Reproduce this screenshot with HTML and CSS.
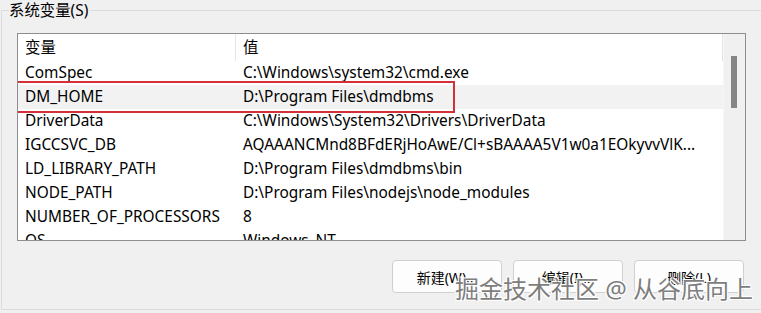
FILE: index.html
```html
<!DOCTYPE html>
<html>
<head>
  <meta charset="UTF-8">
  <title>系统变量</title>
  <link rel="stylesheet" href="styles.css">
</head>
<body>
  <div class="group">
    <div class="legend">系统变量(S)</div>

    <!-- variable list -->
    <div class="listbox">
      <div class="list">
        <div class="row head">
          <div class="col name">变量</div>
          <div class="col value">值</div>
        </div>
        <div class="row">
          <div class="col name">ComSpec</div>
          <div class="col value">C:\Windows\system32\cmd.exe</div>
        </div>
        <div class="row selected">
          <div class="col name">DM_HOME</div>
          <div class="col value">D:\Program Files\dmdbms</div>
          <div class="mark"></div>
        </div>
        <div class="row">
          <div class="col name">DriverData</div>
          <div class="col value">C:\Windows\System32\Drivers\DriverData</div>
        </div>
        <div class="row">
          <div class="col name">IGCCSVC_DB</div>
          <div class="col value">AQAAANCMnd8BFdERjHoAwE/Cl+sBAAAA5V1w0a1EOkyvvVlK...</div>
        </div>
        <div class="row">
          <div class="col name">LD_LIBRARY_PATH</div>
          <div class="col value">D:\Program Files\dmdbms\bin</div>
        </div>
        <div class="row">
          <div class="col name">NODE_PATH</div>
          <div class="col value">D:\Program Files\nodejs\node_modules</div>
        </div>
        <div class="row">
          <div class="col name">NUMBER_OF_PROCESSORS</div>
          <div class="col value">8</div>
        </div>
        <div class="row">
          <div class="col name">OS</div>
          <div class="col value">Windows_NT</div>
        </div>
      </div>
      <div class="scrollbar">
        <div class="thumb"></div>
      </div>
    </div>

    <!-- buttons -->
    <div class="buttons">
      <button>新建(W)...</button>
      <button>编辑(I)...</button>
      <button>删除(L)</button>
    </div>

    <div class="watermark">掘金技术社区 @ 从谷底向上</div>
  </div>
</body>
</html>
```

FILE: styles.css
```css
/* Windows-style environment variable dialog */
body {
  margin: 0;
  background-color: #f0f0f0;
  font-family: "Segoe UI", "Noto Sans", "Noto Sans CJK SC", sans-serif;
  font-size: 15.4px;
  color: #000;
}
.group {
  position: relative;
  margin: 10px 0 0 1px;
  height: 300px;
  border-left: 1px solid #dcdcdc;
  border-top: 1px solid #dcdcdc;
  border-bottom: 1px solid #dcdcdc;
  box-sizing: border-box;
}
.legend {
  display: inline-block;
  margin: -10px 0 0 7px;
  padding: 0 2px 0 0;
  height: 20px;
  line-height: 20px;
  background-color: #f0f0f0;
  vertical-align: top;
}
.listbox {
  display: flex;
  margin: 1px 0 0 15px;
  width: 729px;
  height: 208px;
  border: 1px solid #8e8e8e;
  box-sizing: border-box;
  background-color: #fff;
  overflow: hidden;
}
.list {
  flex: 1;
  overflow: hidden;
}
.row {
  position: relative;
  display: flex;
  height: 24px;
  line-height: 23px;
  white-space: nowrap;
}
.row.head {
  height: 27px;
  line-height: 27px;
}
.row.selected {
  background-color: #f2f2f2;
}
.col {
  box-sizing: border-box;
  padding-left: 7px;
}
.name {
  width: 218px;
}
.value {
  flex: 1;
}
.head .name {
  border-right: 1px solid #e5e5e5;
}
.head .value {
  border-right: 1px solid #e5e5e5;
}
.mark {
  position: absolute;
  left: -3px;
  top: -4px;
  width: 440px;
  height: 32px;
  border: 2px solid #d5303a;
  box-sizing: border-box;
}
.scrollbar {
  width: 22px;
  background-color: #f0f0f0;
  border-left: 1px solid #f6f6f6;
  box-sizing: border-box;
}
.thumb {
  margin: 22px 0 0 7px;
  width: 6px;
  height: 52px;
  background-color: #858585;
}
.buttons {
  display: flex;
  justify-content: flex-end;
  gap: 11px;
  margin: 19px 17px 0 0;
}
button {
  width: 110px;
  height: 33px;
  font-family: "Segoe UI", "Noto Sans", "Noto Sans CJK SC", sans-serif;
  font-size: 14px;
  color: #000;
  background-color: #fdfdfd;
  border: 1px solid #d0d0d0;
  border-radius: 4px;
}
.watermark {
  position: absolute;
  left: 453px;
  top: 259px;
  font-size: 24px;
  color: #7e7e7e;
  text-shadow: 1px 1px 0 #fff, -1px -1px 0 #fff, 1px -1px 0 #fff, -1px 1px 0 #fff;
  white-space: nowrap;
}
```
